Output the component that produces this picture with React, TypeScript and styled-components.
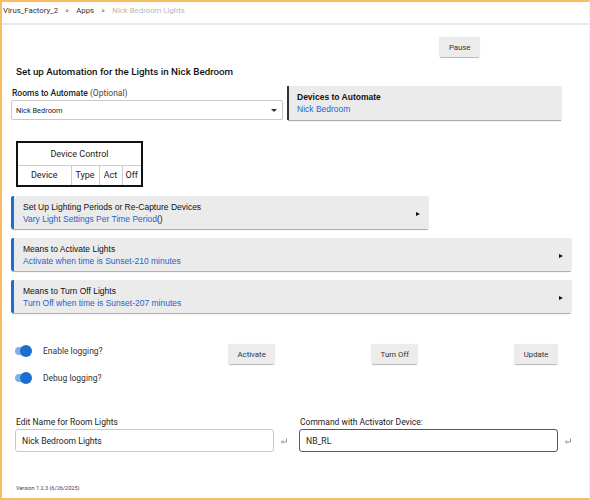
import React from "react";
import styled, { createGlobalStyle } from "styled-components";

const GlobalStyle = createGlobalStyle`
  html, body {
    margin: 0;
    padding: 0;
    background: #fff;
    font-family: Roboto, "Liberation Sans", Arial, sans-serif;
  }
  * { box-sizing: border-box; }
`;

const Frame = styled.div`
  width: 590px;
  height: 500px;
  border-top: 2px solid #fbbd63;
  border-left: 2px solid #fbbd63;
  border-bottom: 2px solid #fbbd63;
  border-right: 1px solid #fdf1e2;
  overflow: hidden;
`;

const Breadcrumb = styled.div`
  height: 23px;
  display: flex;
  align-items: flex-start;
  padding: 4px 0 0 1px;
  font-size: 7.8px;
  color: #333;
  border-bottom: 2px solid #e8e8f2;
  gap: 7px;
`;

const Crumb = styled.span<{ $muted?: boolean }>`
  color: ${(p) => (p.$muted ? "#b8b8b8" : "#333")};
`;

const Chevron = styled.span`
  font-size: 8px;
  color: #444;
  transform: scaleX(0.75);
`;

const Content = styled.div`
  padding: 0 0 0 9px;
`;

const PauseRow = styled.div`
  display: flex;
  justify-content: flex-end;
  padding: 12px 109px 0 0;
`;

const Button = styled.button`
  height: 20px;
  padding: 0 9.5px;
  border: none;
  border-radius: 2px;
  background: #ececec;
  box-shadow: 0 2px 1px -1px #b5b5b5, 0 0 1px #ddd;
  font-family: Roboto, "Liberation Sans", sans-serif;
  font-size: 7.8px;
  color: #333;
`;

const Title = styled.div`
  margin: 10px 0 0 5px;
  font-size: 9.8px;
  line-height: 10px;
  font-weight: 500;
  color: #111;
`;

const RoomRow = styled.div`
  display: flex;
  align-items: flex-end;
  gap: 4px;
  margin-top: 9px;
`;

const FieldColumn = styled.div`
  width: 272px;
`;

const FieldLabel = styled.div`
  font-size: 8.5px;
  line-height: 10px;
  font-weight: 500;
  color: #222;
  margin: 0 0 2px 1px;
`;

const Optional = styled.span`
  font-weight: 400;
  color: #444;
`;

const Select = styled.div`
  height: 20px;
  border: 1px solid #c8c8c8;
  border-radius: 2px;
  display: flex;
  align-items: center;
  justify-content: space-between;
  padding: 0 5px 0 4px;
  font-size: 7.4px;
  color: #222;
`;

const Caret = styled.span`
  width: 0;
  height: 0;
  border-left: 3.5px solid transparent;
  border-right: 3.5px solid transparent;
  border-top: 3.5px solid #333;
`;

const InfoCard = styled.div`
  width: 275px;
  height: 34px;
  background: #ebebeb;
  border-left: 2px solid #333;
  box-shadow: 0 2px 1px -1px #aaa;
  padding: 5px 0 0 8px;
  font-family: "Liberation Sans", Arial, sans-serif;
`;

const CardTitle = styled.div<{ $bold?: boolean }>`
  font-size: 8.5px;
  font-weight: ${(p) => (p.$bold ? 700 : 400)};
  color: #111;
  line-height: 12px;
`;

const CardValue = styled.div`
  font-size: 8.5px;
  color: #2a5fcf;
  line-height: 12px;
`;

const Plain = styled.span`
  color: #111;
`;

const ControlTable = styled.table`
  margin: 21px 0 0 5px;
  border: 2px solid #111;
  border-collapse: collapse;
  font-size: 9px;
  color: #222;
  text-align: center;
`;

const HeadCell = styled.td`
  height: 23px;
  border-bottom: 1px solid #ccc;
  padding: 0;
`;

const Cell = styled.td<{ $w: number }>`
  width: ${(p) => p.$w}px;
  height: 21px;
  padding: 0;
  border-left: 1px solid #ccc;
  &:first-child { border-left: none; }
`;

const CardList = styled.div`
  display: flex;
  flex-direction: column;
  gap: 9px;
  margin-top: 9px;
`;

const LinkCard = styled.div<{ $width: number }>`
  width: ${(p) => p.$width}px;
  height: 33px;
  background: #ebebeb;
  border-left: 3px solid #1a6fd6;
  border-radius: 2px;
  box-shadow: 0 2px 1px -1px #a8a8a8;
  display: flex;
  align-items: center;
  justify-content: space-between;
  padding: 0 9px 0 9px;
  font-family: "Liberation Sans", Arial, sans-serif;
`;

const Arrow = styled.span`
  width: 0;
  height: 0;
  border-top: 2.5px solid transparent;
  border-bottom: 2.5px solid transparent;
  border-left: 4px solid #111;
  margin-top: 2px;
`;

const ControlsRow = styled.div`
  display: flex;
  margin: 31px 0 0 4px;
`;

const ToggleColumn = styled.div`
  width: 213px;
  display: flex;
  flex-direction: column;
  gap: 15px;
  padding-top: 1px;
`;

const ToggleRow = styled.div`
  display: flex;
  align-items: center;
  height: 12px;
  gap: 12px;
  font-size: 8.5px;
  color: #333;
`;

const Switch = styled.span`
  position: relative;
  width: 16px;
  height: 8px;
  border-radius: 4px;
  background: #7fb0ea;
  &::after {
    content: "";
    position: absolute;
    right: -1px;
    top: -2px;
    width: 12px;
    height: 12px;
    border-radius: 50%;
    background: #1a6fd0;
  }
`;

const ButtonGroup = styled.div`
  width: 330px;
  display: flex;
  justify-content: space-between;
  align-items: flex-start;
`;

const BottomGrid = styled.div`
  display: grid;
  grid-template-columns: 284px 284px;
  margin: 33px 0 0 4px;
`;

const BottomField = styled.div``;

const BottomLabel = styled.div`
  font-size: 8.5px;
  line-height: 10px;
  color: #222;
  margin: 0 0 2px 1px;
`;

const InputLine = styled.div`
  display: flex;
  align-items: center;
  gap: 6px;
`;

const TextInput = styled.div<{ $focused?: boolean }>`
  width: 259px;
  height: 23px;
  border: ${(p) => (p.$focused ? "1.5px solid #4353a8" : "1px solid #c8c8c8")};
  border-radius: 3px;
  display: flex;
  align-items: center;
  padding-left: 6px;
  font-size: 8.6px;
  color: #222;
`;

const Version = styled.div`
  margin: 33px 0 0 5px;
  font-size: 5.5px;
  color: #444;
`;

const EnterIcon: React.FC = () => (
  <svg width="8" height="8" viewBox="0 0 8 8" fill="none" stroke="#888" strokeWidth="0.9">
    <path d="M6.5 1.5 V5 H1.5" />
    <path d="M3 3.5 L1.5 5 L3 6.5" />
  </svg>
);

const App: React.FC = () => {
  return (
    <>
      <GlobalStyle />
      <Frame>
        <Breadcrumb>
          <Crumb>Virus_Factory_2</Crumb>
          <Chevron>&gt;</Chevron>
          <Crumb>Apps</Crumb>
          <Chevron>&gt;</Chevron>
          <Crumb $muted>Nick Bedroom Lights</Crumb>
        </Breadcrumb>
        <Content>
          <PauseRow>
            <Button>Pause</Button>
          </PauseRow>
          <Title>Set up Automation for the Lights in Nick Bedroom</Title>
          <RoomRow>
            <FieldColumn>
              <FieldLabel>
                Rooms to Automate <Optional>(Optional)</Optional>
              </FieldLabel>
              <Select>
                <span>Nick Bedroom</span>
                <Caret />
              </Select>
            </FieldColumn>
            <InfoCard>
              <CardTitle $bold>Devices to Automate</CardTitle>
              <CardValue>Nick Bedroom</CardValue>
            </InfoCard>
          </RoomRow>
          <ControlTable>
            <tbody>
              <tr>
                <HeadCell colSpan={4}>Device Control</HeadCell>
              </tr>
              <tr>
                <Cell $w={54}>Device</Cell>
                <Cell $w={28}>Type</Cell>
                <Cell $w={23}>Act</Cell>
                <Cell $w={20}>Off</Cell>
              </tr>
            </tbody>
          </ControlTable>
          <CardList>
            <LinkCard $width={418}>
              <div>
                <CardTitle>Set Up Lighting Periods or Re-Capture Devices</CardTitle>
                <CardValue>
                  Vary Light Settings Per Time Period<Plain>()</Plain>
                </CardValue>
              </div>
              <Arrow />
            </LinkCard>
            <LinkCard $width={561}>
              <div>
                <CardTitle>Means to Activate Lights</CardTitle>
                <CardValue>Activate when time is Sunset-210 minutes</CardValue>
              </div>
              <Arrow />
            </LinkCard>
            <LinkCard $width={561}>
              <div>
                <CardTitle>Means to Turn Off Lights</CardTitle>
                <CardValue>Turn Off when time is Sunset-207 minutes</CardValue>
              </div>
              <Arrow />
            </LinkCard>
          </CardList>
          <ControlsRow>
            <ToggleColumn>
              <ToggleRow>
                <Switch />
                Enable logging?
              </ToggleRow>
              <ToggleRow>
                <Switch />
                Debug logging?
              </ToggleRow>
            </ToggleColumn>
            <ButtonGroup>
              <Button>Activate</Button>
              <Button>Turn Off</Button>
              <Button>Update</Button>
            </ButtonGroup>
          </ControlsRow>
          <BottomGrid>
            <BottomField>
              <BottomLabel>Edit Name for Room Lights</BottomLabel>
              <InputLine>
                <TextInput>Nick Bedroom Lights</TextInput>
                <EnterIcon />
              </InputLine>
            </BottomField>
            <BottomField>
              <BottomLabel>Command with Activator Device:</BottomLabel>
              <InputLine>
                <TextInput $focused>NB_RL</TextInput>
                <EnterIcon />
              </InputLine>
            </BottomField>
          </BottomGrid>
          <Version>Version 1.2.3 (6/26/2025)</Version>
        </Content>
      </Frame>
    </>
  );
};

export default App;
